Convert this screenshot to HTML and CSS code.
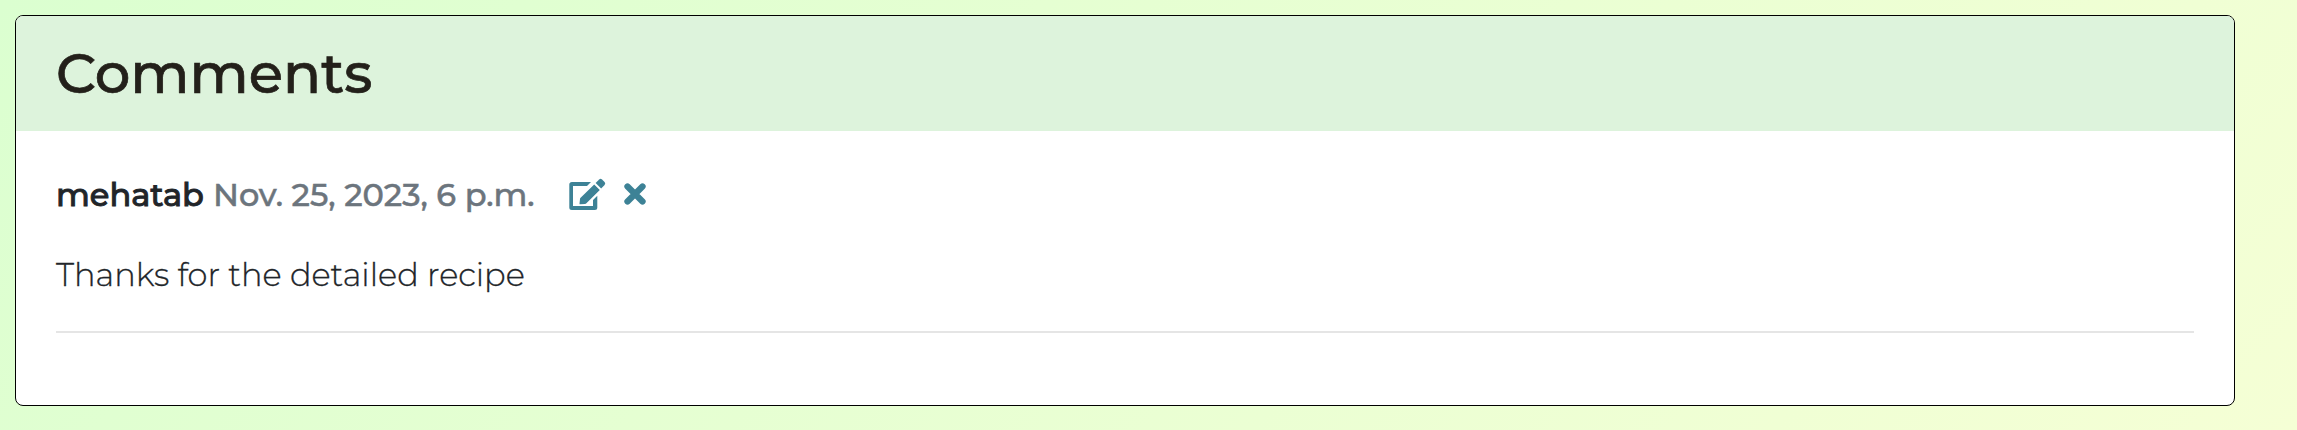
FILE: index.html
```html
<!DOCTYPE html>
<html lang="en">
<head>
<meta charset="utf-8">
<title>Comments</title>
<link rel="stylesheet" href="styles.css">
</head>
<body>
<section class="card">
  <header class="card-header"><h3 class="title">Comments</h3></header>
  <div class="card-body">
    <div class="meta">
      <span class="author">mehatab</span>
      <span class="date">Nov. 25, 2023, 6 p.m.</span>
      <a class="action edit" aria-label="Edit">
        <svg width="37" height="33" viewBox="0 0 37 33"><path d="M3 4H22L18 8H4V28H24V22L28.300 17.700V29.500Q28.300 32 25.800 32H2.800Q.3 32 .3 29.500V6.500Q.3 4 3 4Z"/><path d="M25.200 6.500L30.800 12L17.400 25.200Q16.800 25.800 16 25.900L11.300 26.300Q10.400 26.300 10.500 25.400L11 20.900Q11.100 20.300 11.600 19.800Z"/><path d="M26.600 5.100L30.200 1.500Q31.600.2 33 1.500L35.600 4.100Q36.900 5.500 35.600 6.900L32.100 10.500Z"/></svg>
      </a>
      <a class="action remove" aria-label="Delete">
        <svg width="22" height="22" viewBox="0 0 22 22"><path d="M3.500 3.500l15 15M18.500 3.500l-15 15"/></svg>
      </a>
    </div>
    <p class="text">Thanks for the detailed recipe</p>
    <hr class="rule">
  </div>
</section>
</body>
</html>
```
FILE: styles.css
```css
* { box-sizing: border-box; }
body {
  margin: 0;
  height: 430px;
  padding: 15px;
  background: linear-gradient(135deg, #dbffd0, #f5ffd5);
  font-family: Montserrat, Inter, sans-serif;
  color: #212529;
}
.card {
  width: 2220px;
  height: 391px;
  border: 1px solid #000;
  border-radius: 8px;
  background: #fff;
  overflow: hidden;
}
.card-header {
  height: 115px;
  padding: 23px 40px;
  background: #ddf3dc;
}
.title {
  margin: 0;
  font-size: 56px;
  line-height: 68px;
  font-weight: 500;
  color: #23201a;
  -webkit-text-stroke: 0.7px currentColor;
}
.card-body { padding: 40px; }
.meta {
  display: flex;
  align-items: center;
  height: 46px;
  font-size: 32px;
  font-weight: 500;
  white-space: nowrap;
}
.author { width: 157px; -webkit-text-stroke: 0.9px currentColor; }
.date { width: 356px; color: #6c757d; -webkit-text-stroke: 0.5px currentColor; }
.action { display: flex; color: #3d8296; }
.edit { width: 55px; }
.action svg { display: block; fill: currentColor; }
.remove svg { fill: none; stroke: currentColor; stroke-width: 6.300; stroke-linecap: round; }
.text {
  margin: 34px 0 0;
  font-size: 32px;
  line-height: 48px;
  font-weight: 300;
  -webkit-text-stroke: 0.3px currentColor;
}
.rule {
  margin: 32px 0 0;
  height: 2px;
  border: 0;
  background: #e5e5e5;
}
```
